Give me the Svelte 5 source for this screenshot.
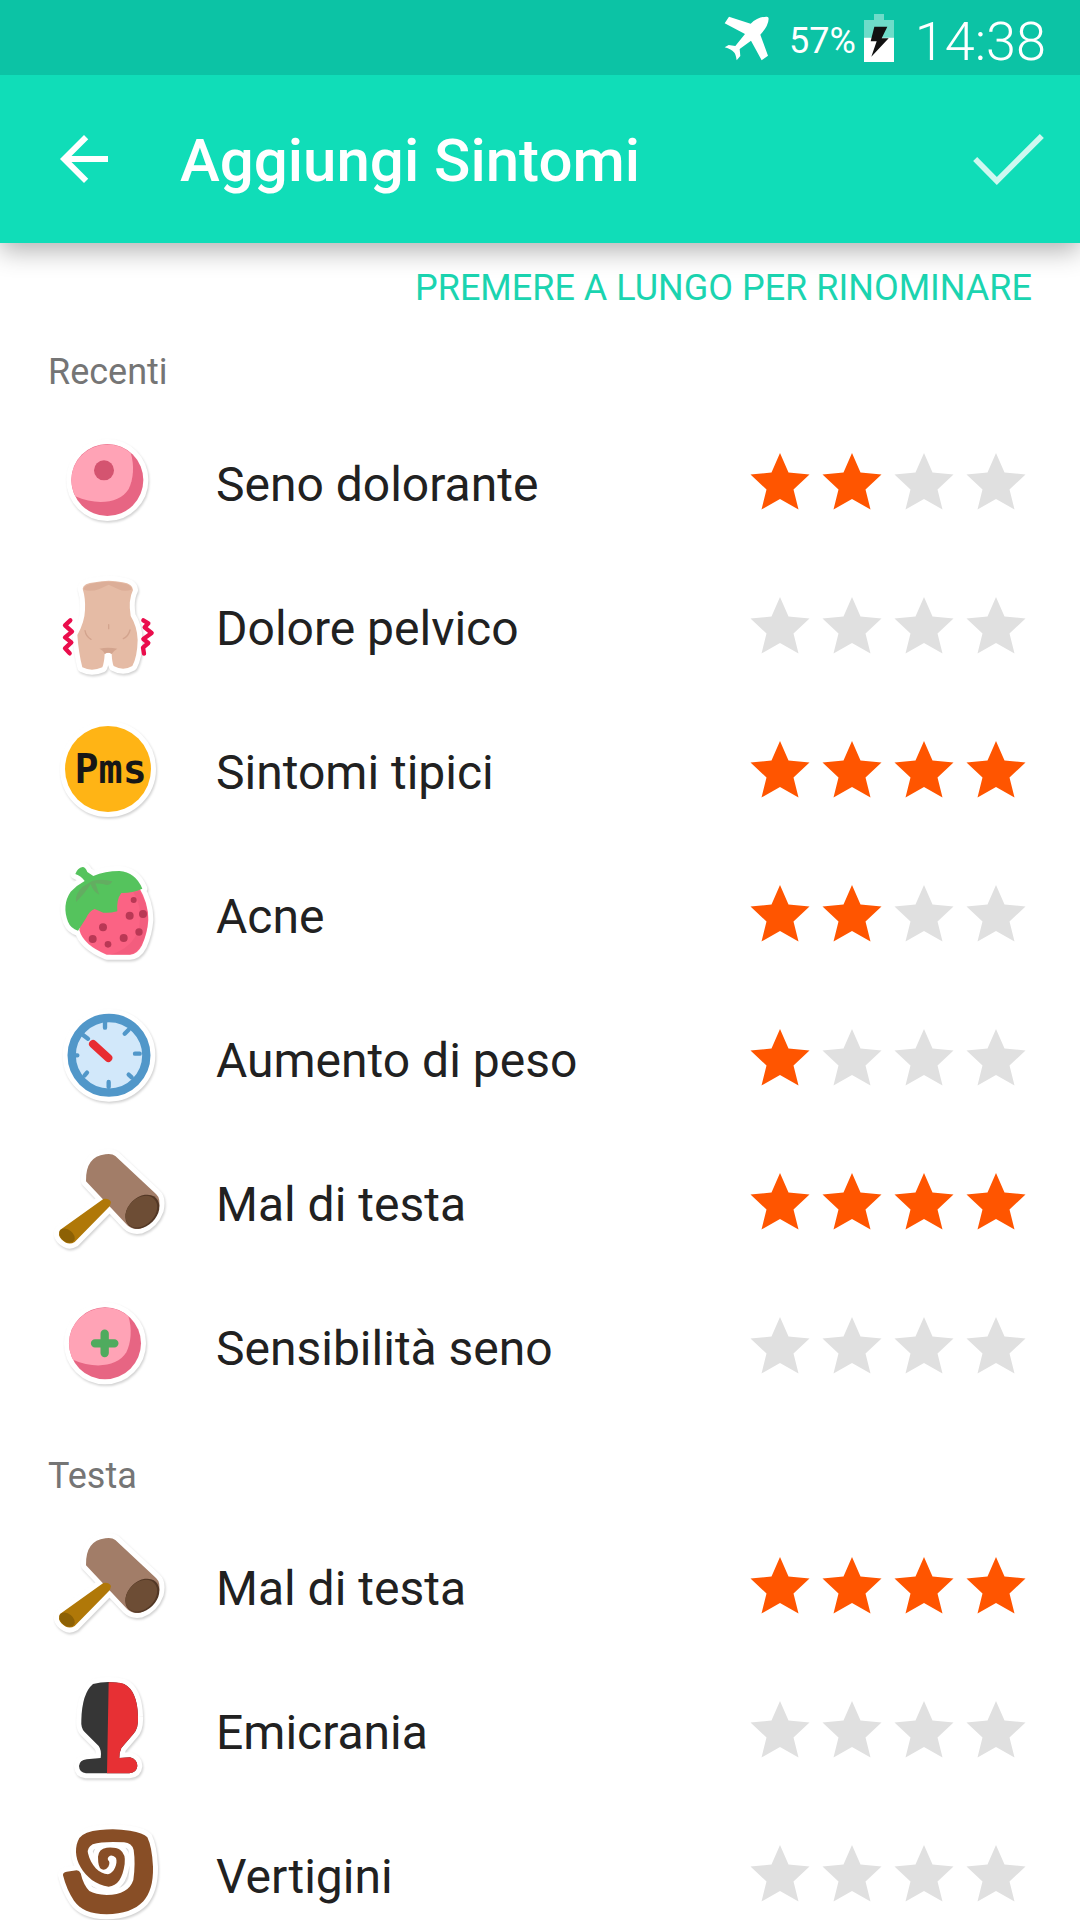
<svelte:options runes={true} />

<script lang="ts">
  type Symptom = { name: string; icon: string; stars: number };
  type Section = { title: string; items: Symptom[] };

  const sections: Section[] = $state([
    {
      title: 'Recenti',
      items: [
        { name: 'Seno dolorante', icon: 'breast', stars: 2 },
        { name: 'Dolore pelvico', icon: 'pelvis', stars: 0 },
        { name: 'Sintomi tipici', icon: 'pms', stars: 4 },
        { name: 'Acne', icon: 'strawberry', stars: 2 },
        { name: 'Aumento di peso', icon: 'scale', stars: 1 },
        { name: 'Mal di testa', icon: 'hammer', stars: 4 },
        { name: 'Sensibilità seno', icon: 'tender', stars: 0 },
      ],
    },
    {
      title: 'Testa',
      items: [
        { name: 'Mal di testa', icon: 'hammer', stars: 4 },
        { name: 'Emicrania', icon: 'migraine', stars: 0 },
        { name: 'Vertigini', icon: 'spiral', stars: 0 },
      ],
    },
  ]);

  const viewBoxes: Record<string, string> = {
    breast: '0 -24 420 432',
    pelvis: '0 408 420 432',
    pms: '0 0 420 432',
    strawberry: '0 432 420 432',
    scale: '0 -6 420 432',
    hammer: '0 426 420 432',
    tender: '0 -42 420 432',
    migraine: '0 0 420 432',
    spiral: '0 432 420 432',
  };

  // outlines, also used for the white sticker border
  const torso = 'M128 506Q130 490 165 487Q206 478 248 487Q278 492 279 510Q264 540 272 588Q292 620 293 660Q292 710 277 738Q250 754 221 738Q216 726 215 701Q205 696 194 701Q193 726 187 742Q155 756 127 742Q116 700 112 645Q134 606 135 570Q137 535 128 506Z';
  const berry = 'M150 560L118 690Q130 735 200 764H270Q292 764 306 736Q322 700 325 660Q326 610 296 560Z';
  const leaf = 'M106 522Q112 504 128 501Q136 501 142 516L160 528Q195 513 238 513Q286 516 307 566Q275 580 244 579Q229 598 232 634Q208 640 190 638L164 627Q148 632 138 655L114 692Q92 685 84 665Q65 615 92 575Q110 556 134 543Q124 528 106 522Z';
  const hammerHead = 'M138 574Q136 500 196 493Q216 490 226 498L348 612Q364 626 356 660Q342 700 302 716Q276 720 262 706Z';
  const hammerGrip = 'M190 627Q206 624 213 636Q212 648 204 654L104 756Q84 768 64 748Q52 734 60 720Z';
  const goblet = 'M159 72Q205 60 252 72Q292 92 294 170Q296 205 280 222L244 264Q238 276 238 294L270 292Q292 298 292 318Q290 338 268 340H138Q118 338 117 318Q119 300 140 298L182 294Q186 272 176 258L134 216Q122 205 124 180Q126 100 159 72Z';
  const swirl = 'M69 646Q68 637 80 635L110 631Q118 631 122 640Q130 675 148 693Q166 704 200 705C245 704 270 690 280 660Q287 610 281 570Q276 549 252 547Q190 543 158 553Q140 564 144 580C152 615 178 643 204 643C222 640 234 610 228 594Q220 584 210 587Q201 592 204 600Q212 606 205 620Q196 633 184 627Q174 622 174 590Q176 566 200 563Q228 561 240 569Q258 582 254 612C248 655 232 678 206 680C168 676 138 650 122 622C104 592 104 558 118 534Q132 515 180 510Q225 504 270 512Q310 518 322 532Q336 560 339 620C340 670 330 700 310 724C285 750 250 762 200 763C150 762 120 748 102 722Q80 690 69 646Z';
</script>

{#snippet round(cx: number, cy: number)}
  <circle class="halo" {cx} {cy} r="108" />
  <circle {cx} {cy} r="108" fill="#e76583" />
  <path
    transform="translate({cx - 202} {cy - 180})"
    d="M106 229Q94 205 94 180A108 108 0 0 1 272 99C284 135 280 180 266 207C240 250 170 258 106 229Z"
    fill="#ffa3b6"
  />
{/snippet}

{#snippet symptomIcon(icon: string)}
  <svg class="icon" viewBox={viewBoxes[icon]} aria-hidden="true">
    {#if icon === 'breast'}
      {@render round(202, 180)}
      <circle cx="192" cy="151" r="30" fill="#d45470" />
    {:else if icon === 'tender'}
      {@render round(195, 160)}
      <path d="M194 131V189M165 160H223" stroke="#4fab5e" stroke-width="25" stroke-linecap="round" />
    {:else if icon === 'pelvis'}
      <path class="halo" d={torso} />
      <path d={torso} fill="#e5bba5" />
      <path d="M130 508Q150 518 180 506L206 494L232 506Q256 518 276 508Q274 492 240 488Q206 482 170 488Q134 492 130 508Z" fill="#dcae98" />
      <path d="M178 686Q204 680 232 686Q218 694 215 702Q205 694 194 702Q191 692 178 686Z" fill="#d3a48e" />
      <g fill="none" stroke="#d3a48e" stroke-width="4" stroke-linecap="round">
        <path d="M135 632Q138 650 153 658M270 630Q266 648 250 656M206 614V626" />
      </g>
      <g fill="none" stroke="#ea0d4c" stroke-width="13" stroke-linecap="round" stroke-linejoin="round">
        <path d="M91 601L75 616L96 635L75 652L94 667L75 685L89 700" />
        <path d="M310 601L325 610L314 622L335 639L310 657L325 669L309 683L312 701" />
      </g>
    {:else if icon === 'pms'}
      <circle class="halo" cx="204" cy="207" r="129" />
      <circle cx="204" cy="207" r="129" fill="#ffb415" />
      <text class="pms" x="212" y="250" text-anchor="middle">Pms</text>
    {:else if icon === 'strawberry'}
      <path class="halo" d={berry + leaf} />
      <path d={berry} fill="#fb6384" />
      <path d="M298 572Q330 620 322 680Q310 750 270 764H210Q280 744 298 680Q308 620 280 576Z" fill="#e95675" opacity=".4" />
      <path d={leaf} fill="#55c35d" />
      <path d="M158 542Q190 535 217 544Q210 560 190 552L166 550L178 584Q160 576 152 552Q138 576 108 606Q104 582 128 560Z" fill="#63ad61" />
      <g fill="#b93855">
        <circle cx="281" cy="600" r="9" /><circle cx="269" cy="647" r="12" />
        <circle cx="309" cy="642" r="12" /><circle cx="189" cy="682" r="12" />
        <circle cx="158" cy="717" r="12" /><circle cx="251" cy="714" r="12" />
        <circle cx="297" cy="696" r="11" /><circle cx="204" cy="733" r="10" />
      </g>
    {:else if icon === 'scale'}
      <circle class="halo" cx="207" cy="196" r="124" />
      <circle cx="207" cy="196" r="112" fill="#d2e8fa" stroke="#5197c9" stroke-width="25" />
      <path
        d="M195 96V113M266 119L254 131M299 191H285M275 262L266 254M206 291V276M134 256L141 248M106 196H112M122 130L144 146"
        stroke="#5197c9" stroke-width="13" stroke-linecap="round"
      />
      <path d="M159 162L205 204" stroke="#e82c31" stroke-width="24" stroke-linecap="round" />
    {:else if icon === 'hammer'}
      <path class="halo" d={hammerHead + hammerGrip} />
      <path d={hammerHead} fill="#a27d68" />
      <ellipse cx="307" cy="665" rx="58" ry="43" transform="rotate(-45 307 665)" fill="#523725" />
      <ellipse cx="304" cy="665" rx="54" ry="40" transform="rotate(-45 304 665)" fill="#6d4d35" />
      <path d={hammerGrip} fill="#b07808" />
      <ellipse cx="81" cy="737" rx="26" ry="18" transform="rotate(38 81 737)" fill="#8d6105" />
    {:else if icon === 'migraine'}
      <path class="halo" d={goblet} />
      <path d={goblet} fill="#363636" />
      <path d="M206 67Q240 66 252 72Q292 92 294 170Q296 205 280 222L244 264Q238 276 238 294L270 292Q292 298 292 318Q290 338 268 340H201Z" fill="#e73034" />
    {:else if icon === 'spiral'}
      <path class="halo" d={swirl} />
      <path d={swirl} fill="#884e26" />
    {/if}
  </svg>
{/snippet}

<div class="screen">
  <header>
    <div class="status">
      <svg width="45" height="46" viewBox="135 45 135 138" aria-hidden="true">
        <path d="M262 50Q269 49 269 56Q268 78 244 104L267 167L248 181L216 122L182 147L184 168L173 181Q170 160 164 156Q158 148 137 142L149 135L169 138L198 102L137 70L150 50L215 71Q236 50 262 50Z" fill="#fff" />
      </svg>
      <span class="percent">57%</span>
      <svg width="30" height="48" viewBox="552 40 90 144" aria-hidden="true">
        <path d="M582 40H612V58H642V111H552V58H582Z" fill="#6edcc9" />
        <path d="M552 111H642V184H552Z" fill="#fff" />
        <path d="M583 78H622L605 113H626L574 168L590 122H572Z" fill="#111" />
      </svg>
      <time>14:38</time>
    </div>
    <div class="toolbar">
      <button aria-label="Indietro">
        <svg width="72" height="72" viewBox="0 0 24 24"><path d="M20 11H7.83l5.59-5.59L12 4l-8 8 8 8 1.41-1.41L7.83 13H20z" fill="#fff" /></svg>
      </button>
      <h1>Aggiungi Sintomi</h1>
      <button aria-label="Conferma">
        <svg width="71" height="51" viewBox="878 400 212 153"><path d="M884 475L949 541L1084 406" fill="none" stroke="#cff8f0" stroke-width="17" /></svg>
      </button>
    </div>
  </header>

  <main>
    <p class="hint">PREMERE A LUNGO PER RINOMINARE</p>
    {#each sections as section}
      <h2>{section.title}</h2>
      <ul>
        {#each section.items as item}
          <li>
            {@render symptomIcon(item.icon)}
            <span class="name">{item.name}</span>
            <div class="stars" role="group" aria-label={item.name}>
              {#each [1, 2, 3, 4] as n}
                <button class="star" class:on={n <= item.stars} aria-label="{n} su 4" onclick={() => (item.stars = item.stars === n ? 0 : n)}>
                  <svg width="72" height="72" viewBox="0 0 72 72"><path d="M36 5L44.5 24.5L65.5 26.5L49.5 41.5L54.5 61.5L36 51L17.5 61.5L22.5 41.5L6.5 26.5L27.5 24.5Z" /></svg>
                </button>
              {/each}
            </div>
          </li>
        {/each}
      </ul>
    {/each}
  </main>
</div>

<style>
  :global(body) { margin: 0; background: #fff; }
  .screen { display: flex; flex-direction: column; height: 100vh; overflow: hidden;
            font-family: Roboto, "Noto Sans", sans-serif; color: #212121; }
  button  { margin: 0; padding: 0; border: 0; background: none; cursor: pointer; }
  button svg { display: block; }

  header  { position: relative; z-index: 1; flex: none; background: #10ddb8;
            box-shadow: 0 8px 24px rgba(0, 0, 0, 0.3); }
  .status { display: flex; align-items: center; justify-content: flex-end; height: 75px;
            padding-right: 34px; background: #0cc3a5; color: #fff; }
  .percent { margin: 6px 8px 0 20px; font-size: 36px; line-height: 42px; }
  .status time { margin: 8px 0 0 21px; font-size: 54px; line-height: 60px; font-weight: 300; }
  .toolbar { display: flex; align-items: center; height: 168px; padding: 0 36px 0 48px; }
  h1      { flex: 1; margin: 0 0 0 60px; padding-top: 4px; font-size: 60px; line-height: 72px;
            font-weight: 500; color: #fff; }

  main    { flex: 1; min-height: 0; overflow-y: auto; scrollbar-width: none; }
  .hint   { margin: 0; padding: 24px 48px 7px; font-size: 36px; line-height: 42px;
            text-align: right; color: #1bd4b0; }
  h2      { box-sizing: border-box; height: 96px; margin: 0; padding: 35px 48px 0;
            font-size: 36px; line-height: 42px; font-weight: 400; color: #757575; }
  ul      { margin: 0; padding: 0; list-style: none; }
  li      { display: flex; align-items: center; height: 144px; padding: 0 48px 0 40px; }
  .icon   { flex: none; width: 140px; height: 144px; }
  .name   { flex: 1; margin-left: 36px; padding-top: 2px; font-size: 48px; line-height: 56px; }
  .stars  { display: flex; }
  .star   { fill: #e0e0e0; }
  .star.on { fill: #ff5500; }

  .halo   { fill: #fff; stroke: #fff; stroke-width: 30px; stroke-linejoin: round;
            filter: drop-shadow(3px 5px 3px rgba(0, 0, 0, 0.18)); }
  .pms    { font: 700 120px "DejaVu Sans Mono", monospace; fill: #171717; }
</style>
